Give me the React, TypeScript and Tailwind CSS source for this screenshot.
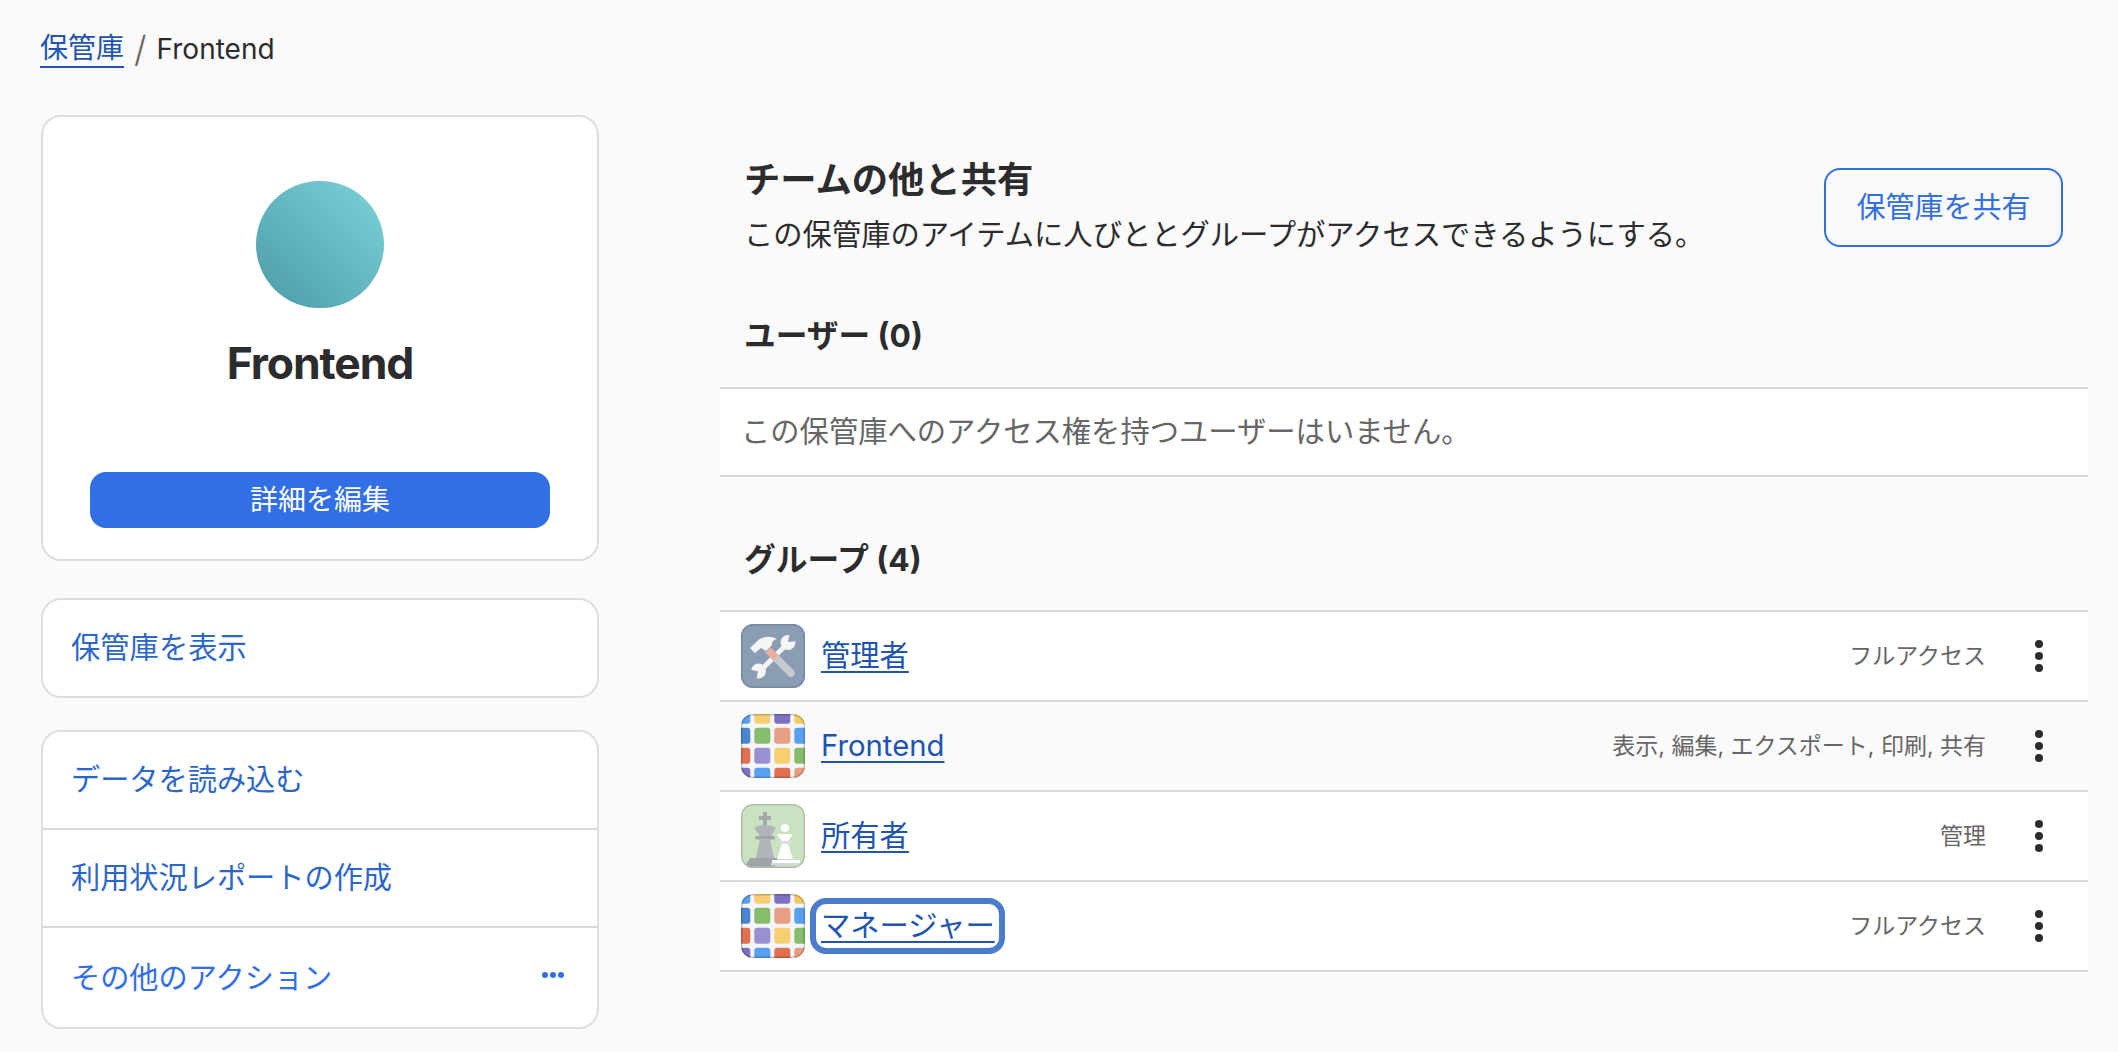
const cjk = "font-['Inter','Noto_Sans_CJK_JP',sans-serif]";

const gridColors = [
  ["#5aa0f0", "#f8cf70", "#8070c0", "#f5c860"],
  ["#4a85d0", "#85bd6d", "#e89e85", "#5aa0f0"],
  ["#e07050", "#9b90cf", "#f8cf70", "#85bd6d"],
  ["#8070c0", "#5aa0f0", "#e07050", "#e89e85"],
];

function GridIcon() {
  return (
    <svg viewBox="0 0 64 64" className="w-16 h-16 shrink-0 rounded-[12px]">
      <rect width="64" height="64" fill="#f3f5f8" />
      {gridColors.map((row, r) =>
        row.map((c, i) => (
          <rect key={`${r}-${i}`} x={-6.7 + i * 20} y={-6.3 + r * 20} width="16" height="16" rx="3" fill={c} />
        ))
      )}
      <rect x="0.75" y="0.75" width="62.5" height="62.5" rx="11" fill="none" stroke="#000" strokeOpacity="0.2" strokeWidth="1.5" />
    </svg>
  );
}

function ToolsIcon() {
  return (
    <svg viewBox="0 0 64 64" className="w-16 h-16 shrink-0 rounded-[12px]">
      <rect width="64" height="64" fill="#8a9db5" />
      {/* wrench */}
      <path d="M20 46 L46 20" stroke="#f4f5f6" strokeWidth="5" />
      <circle cx="47" cy="18.5" r="7.5" fill="#f4f5f6" />
      <path d="M47 18 L49 8 L59 8 L57 17 Z" fill="#8a9db5" />
      <circle cx="17.5" cy="47" r="7.5" fill="#f4f5f6" />
      <path d="M17 47.5 L7 45 L7 57 L15 57 Z" fill="#8a9db5" />
      {/* hammer */}
      <path d="M35 34 L50 49" stroke="#c6cbd0" strokeWidth="7.5" strokeLinecap="round" />
      <path d="M27 26 L35 34" stroke="#e9ae9c" strokeWidth="7.5" />
      <path d="M9 24 L18 15.5 C23 12 30 12 36 15 C32 16 30.5 18 31 21 L25 27 L20 24 L14 29 Z" fill="#f4f5f6" />
      <rect x="0.75" y="0.75" width="62.5" height="62.5" rx="11" fill="none" stroke="#76889f" strokeWidth="1.5" />
    </svg>
  );
}

function ChessIcon() {
  return (
    <svg viewBox="0 0 64 64" className="w-16 h-16 shrink-0 rounded-[12px]">
      <rect width="64" height="64" fill="#cbe2c0" />
      {/* king */}
      <path d="M22 8 h4 v4 h4 v4 h-4 v5 h-4 v-5 h-4 v-4 h4 Z" fill="#a5a9ae" />
      <path d="M13 24 C18 20 30 20 35 24 L30 32 H19 Z" fill="#b1b5ba" />
      <rect x="14" y="32" width="20" height="3.5" rx="1.75" fill="#a0a4a9" />
      <path d="M19 35.5 H29 L33 54 H15 Z" fill="#b1b5ba" />
      <path d="M9 54 H37 L34 64 H3 Z" fill="#a0a4a9" />
      {/* pawn */}
      <circle cx="44" cy="24" r="4" fill="#ffffff" />
      <path d="M36 30 H52 L47 37 H41 Z" fill="#ffffff" />
      <rect x="37" y="37" width="14" height="3" rx="1.5" fill="#d8dde2" />
      <path d="M41 40 H47 L52 55 H36 Z" fill="#ffffff" />
      <rect x="31" y="56" width="28" height="3" fill="#ffffff" />
      <rect x="30" y="59" width="32" height="2.5" fill="#d3d8de" />
      <rect x="0.75" y="0.75" width="62.5" height="62.5" rx="11" fill="none" stroke="#aebfa5" strokeWidth="1.5" />
    </svg>
  );
}

function Kebab() {
  return (
    <div className="flex flex-col gap-1 w-2 shrink-0">
      <span className="block w-2 h-2 rounded-full bg-[#2c2c2e]" />
      <span className="block w-2 h-2 rounded-full bg-[#2c2c2e]" />
      <span className="block w-2 h-2 rounded-full bg-[#2c2c2e]" />
    </div>
  );
}

interface RowProps {
  readonly icon: React.ReactNode;
  readonly name: string;
  readonly access: string;
  readonly hovered?: boolean;
  readonly focused?: boolean;
}

function GroupRow({ icon, name, access, hovered, focused }: RowProps) {
  return (
    <div className={`flex items-center h-[90px] pl-[21px] pr-[45px] border-b-2 border-[#d8d8de] ${hovered ? "bg-[#fafafa]" : "bg-white"}`}>
      {icon}
      <div className="relative ml-4">
        <a className="text-[29.3px] leading-[36px] text-[#2054b0] underline decoration-2 underline-offset-[5px]">{name}</a>
        {focused && (
          <span className="absolute -left-[11px] -right-[10px] -top-[10px] -bottom-[10px] rounded-[16px] border-[6px] border-[#4a7bcc]" />
        )}
      </div>
      <span className="ml-auto text-[23px] text-[#666666]">{access}</span>
      <div className="ml-[49px]">
        <Kebab />
      </div>
    </div>
  );
}

export default function App() {
  return (
    <div className={`min-h-[1052px] bg-[#fafafa] text-[#2c2c2e] ${cjk} pl-[41px] pr-[30px] pt-[29px]`}>
      <nav className="flex items-center h-[40px] text-[28px] -ml-px">
        <a className="text-[#2054b0] border-b-2 border-[#2054b0] leading-[36px]">保管庫</a>
        <span className="mx-[10px] text-[36px] font-light leading-[40px] text-[#666666]">/</span>
        <span>Frontend</span>
      </nav>
      <div className="flex mt-[46px]">
        <aside className="w-[558px] shrink-0 flex flex-col gap-[33px]">
          <section className="h-[446px] mb-[4px] flex flex-col items-center rounded-[20px] border-2 border-[#dcdce2] bg-white pt-[64px]">
            <div className="w-[128px] h-[127px] rounded-full bg-gradient-to-tr from-[#4a9ba8] to-[#7ed2d8]" />
            <h1 className="mt-[22px] text-[44.5px] leading-[66px] font-bold tracking-tight">Frontend</h1>
            <button className="mt-[76px] w-[460px] h-[56px] rounded-[16px] bg-[#326ee4] text-white text-[28px] leading-none">詳細を編集</button>
          </section>
          <section className="h-[100px] flex items-center px-[28px] rounded-[20px] border-2 border-[#dedede] bg-white text-[29.3px] text-[#2c66c7]">
            保管庫を表示
          </section>
          <section className="-mt-px flex flex-col rounded-[20px] border-2 border-[#dedede] bg-white text-[29.2px] text-[#2c66c7]">
            <div className="h-[98px] flex items-center px-[28px] border-b-2 border-[#d8d8de]">データを読み込む</div>
            <div className="h-[98px] flex items-center px-[28px] border-b-2 border-[#d8d8de]">利用状況レポートの作成</div>
            <div className="h-[99px] flex items-center justify-between pl-[28px] pr-[29px] text-[#316fe3]">
              <span>その他のアクション</span>
              <span className="flex gap-[2px] mr-[4px] mb-[6px]">
                <span className="block w-[6px] h-[6px] rounded-full bg-[#316fe3]" />
                <span className="block w-[6px] h-[6px] rounded-full bg-[#316fe3]" />
                <span className="block w-[6px] h-[6px] rounded-full bg-[#316fe3]" />
              </span>
            </div>
          </section>
        </aside>
        <main className="ml-[121px] w-[1368px]">
          <header className="flex items-center justify-between pl-[24px] pr-[25px] pt-[40px]">
            <div>
              <h2 className="text-[36.3px] leading-[50px] font-bold">チームの他と共有</h2>
              <p className="mt-[10px] text-[29.3px] leading-[40px]">この保管庫のアイテムに人びととグループがアクセスできるようにする。</p>
            </div>
            <button className="w-[239px] h-[79px] mt-[5px] rounded-[16px] border-2 border-[#326ee4] text-[#326ee4] text-[29px] leading-none">保管庫を共有</button>
          </header>
          <h3 className="mt-[59px] pl-[24px] text-[31.7px] leading-[44px] font-bold">ユーザー (0)</h3>
          <div className="mt-[29px] h-[90px] flex items-center px-[21px] border-y-2 border-[#d8d8de] bg-white text-[29.3px] text-[#666666]">
            この保管庫へのアクセス権を持つユーザーはいません。
          </div>
          <h3 className="mt-[61px] pl-[24px] text-[31.7px] leading-[44px] font-bold">グループ (4)</h3>
          <div className="mt-[28px] border-t-2 border-[#d8d8de]">
            <GroupRow icon={<ToolsIcon />} name="管理者" access="フルアクセス" />
            <GroupRow icon={<GridIcon />} name="Frontend" access="表示, 編集, エクスポート, 印刷, 共有" hovered />
            <GroupRow icon={<ChessIcon />} name="所有者" access="管理" />
            <GroupRow icon={<GridIcon />} name="マネージャー" access="フルアクセス" focused />
          </div>
        </main>
      </div>
    </div>
  );
}
